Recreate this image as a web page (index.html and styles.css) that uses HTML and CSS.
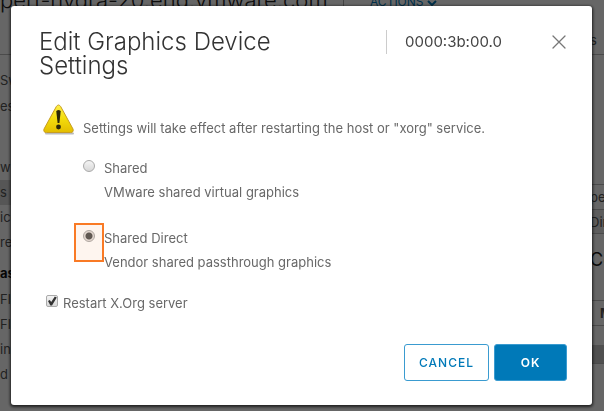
FILE: index.html
```html
<!DOCTYPE html>
<html lang="en">
<head>
    <meta charset="UTF-8">
    <meta name="viewport" content="width=device-width, initial-scale=1.0">
    <title>Edit Graphics Device Settings</title>
    <link rel="stylesheet" href="styles.css">
</head>
<body>
    <div class="page">
        <div class="page-header">
            <div class="host-name">pert-hydra-20.eng.vmware.com</div>
            <a class="actions" href="#">ACTIONS
                <svg width="10" height="6" viewBox="0 0 10 6"><path d="M1 1l4 4 4-4" fill="none" stroke="currentColor" stroke-width="2"/></svg>
            </a>
            <div class="tab">s</div>
        </div>
        <div class="page-body">
            <ul class="nav">
                <li>Sw</li>
                <li>es</li>
                <li class="gap"></li>
                <li>w</li>
                <li class="selected">s</li>
                <li>ice</li>
                <li>re</li>
                <li class="section">ask</li>
                <li>Fla</li>
                <li>Fla</li>
                <li>in</li>
                <li>d T</li>
            </ul>
            <div class="panel">
                <div class="cell">pe</div>
                <div class="cell shaded">Dire</div>
                <div class="panel-title">Ce</div>
                <div class="cell bold">M</div>
                <div class="cell"></div>
                <div class="strip"></div>
                <div class="cell"></div>
            </div>
        </div>
    </div>

    <div class="backdrop">
        <form class="modal" role="dialog" aria-labelledby="modal-title">
            <div class="modal-header">
                <h1 id="modal-title">Edit Graphics Device Settings</h1>
                <div class="device">0000:3b:00.0</div>
                <button type="button" class="close" aria-label="Close">
                    <svg width="16" height="16" viewBox="0 0 16 16"><path d="M2 2l12 12M14 2L2 14" fill="none" stroke="#777" stroke-width="1.3" stroke-linecap="round"/></svg>
                </button>
            </div>
            <div class="modal-body">
                <div class="message">
                    <svg width="32" height="31" viewBox="0 0 32 31">
                        <defs>
                            <linearGradient id="warn" x1="0" y1="0" x2="0" y2="1">
                                <stop offset="0" stop-color="#fff04a"/>
                                <stop offset="0.5" stop-color="#f3dc0c"/>
                                <stop offset="1" stop-color="#e3bd00"/>
                            </linearGradient>
                        </defs>
                        <path d="M3 29.5h27" stroke="#bbb" stroke-width="2" stroke-linecap="round"/>
                        <path d="M13.3 2.6Q15.5-.6 17.7 2.6L30 25Q31 28.5 27.5 28.5H3.5Q0 28.5 1 25Z" fill="url(#warn)" stroke="#c79d20" stroke-width="1"/>
                        <path d="M13.3 7.5Q13.3 6 15.5 6t2.2 1.500L16.4 19h-1.800Z" fill="#2b2708"/>
                        <circle cx="15.5" cy="23" r="2.4" fill="#2b2708"/>
                    </svg>
                    <p>Settings will take effect after restarting the host or "xorg" service.</p>
                </div>
                <div class="option">
                    <input type="radio" name="mode" id="shared">
                    <label for="shared">Shared</label>
                    <p>VMware shared virtual graphics</p>
                </div>
                <div class="option">
                    <input type="radio" name="mode" id="direct" checked>
                    <label for="direct">Shared Direct</label>
                    <p>Vendor shared passthrough graphics</p>
                    <div class="marker"></div>
                </div>
                <div class="restart">
                    <input type="checkbox" id="restart" checked>
                    <label for="restart">Restart X.Org server</label>
                </div>
            </div>
            <div class="modal-footer">
                <button type="button" class="btn">CANCEL</button>
                <button type="button" class="btn primary">OK</button>
            </div>
        </form>
    </div>
</body>
</html>
```

FILE: styles.css
```css
* {
    box-sizing: border-box;
}
body {
    margin: 0;
    font-family: Inter, "Open Sans", sans-serif;
    font-size: 13px;
    color: #686868;
    background: #fff;
}
h1, p, ul {
    margin: 0;
    padding: 0;
}

/* page behind the dialog */
.page {
    height: 100vh;
    overflow: hidden;
    color: #555;
}
.page-header {
    display: flex;
    height: 55px;
    border-bottom: 1px solid #bbb;
    white-space: nowrap;
}
.host-name {
    width: 344px;
    height: 24px;
    margin-top: -14px;
    border-right: 1px solid #aaa;
    font-size: 22px;
    line-height: 28px;
    font-weight: 300;
    color: #222;
}
.actions {
    height: 20px;
    margin: -8px 0 0 26px;
    font-size: 12px;
    line-height: 20px;
    color: #0079b8;
    text-decoration: none;
}
.tab {
    width: 14px;
    margin: 32px 0 0 auto;
}
.page-body {
    display: flex;
    justify-content: space-between;
}
.nav {
    width: 100px;
    padding-top: 13px;
    list-style: none;
    line-height: 25px;
    white-space: nowrap;
}
.nav li {
    height: 25px;
}
.nav .gap {
    height: 36px;
}
.nav .selected {
    background: #d8d8d8;
}
.nav .section {
    height: 32px;
    padding-top: 6px;
    font-weight: bold;
    color: #111;
}
.nav li:first-child {
    height: 26px;
}
.panel {
    width: 14px;
    padding-top: 129px;
    white-space: nowrap;
}
.cell {
    height: 25px;
    border-top: 1px solid #bbb;
    line-height: 24px;
}
.shaded {
    background: #e8e8e8;
    border-bottom: 1px solid #bbb;
}
.bold {
    padding-left: 10px;
    font-weight: bold;
}
.panel-title {
    height: 66px;
    line-height: 52px;
    font-size: 18px;
    color: #222;
}
.strip {
    height: 18px;
    margin-top: -5px;
    background: #c8c8c8;
}

/* dialog */
.backdrop {
    position: fixed;
    inset: 0;
    padding: 6px 12px 6px 11px;
    background: rgba(0, 0, 0, 0.6);
}
.modal {
    display: flex;
    flex-direction: column;
    height: 100%;
    padding: 24px 25px 24px 28px;
    border-radius: 3px;
    background: #fff;
    box-shadow: 0 1px 3px 1px rgba(0, 0, 0, 0.7);
}
.modal-header {
    display: flex;
    align-items: flex-start;
    line-height: 24px;
}
.modal-header h1 {
    flex: 1;
    padding-right: 80px;
    font-size: 24px;
    line-height: 24px;
    font-weight: 300;
    color: #333;
}
.device {
    width: 157px;
    padding-left: 18px;
    border-left: 1px solid #ccc;
    font-size: 15px;
    color: #444;
}
.close {
    display: flex;
    align-items: center;
    justify-content: flex-end;
    width: 24px;
    height: 24px;
    padding: 0;
    border: none;
    background: none;
    cursor: pointer;
}
.modal-body {
    flex: 1;
    padding: 26px 0 0 4px;
    line-height: 24px;
}
.message {
    display: flex;
    gap: 8px;
    height: 36px;
}
.message p {
    margin-top: 12px;
}
.option {
    position: relative;
    display: grid;
    grid-template-columns: 21px 1fr;
    margin: 16px 0 22px 40px;
}
.option p {
    grid-column: 2;
}
.option + .option {
    margin-top: 0;
    margin-bottom: 17px;
}
input {
    appearance: none;
    width: 12px;
    height: 12px;
    margin: 4px 0 0;
    border: 1px solid #aaa;
    background: linear-gradient(#f4f4f4, #d8d8d8);
}
input[type="radio"] {
    border-radius: 50%;
}
input[type="radio"]:checked {
    background: radial-gradient(circle, #555 0 3px, #e4e0de 4px);
}
.marker {
    position: absolute;
    top: -3px;
    left: -9px;
    width: 30px;
    height: 39px;
    border: 2px solid #f97a25;
    background: rgba(245, 130, 51, 0.08);
    pointer-events: none;
}
.restart {
    display: flex;
    gap: 5px;
    padding-left: 3px;
}
input[type="checkbox"] {
    border-radius: 2px;
}
input[type="checkbox"]:checked::before {
    content: "";
    display: block;
    width: 10px;
    height: 10px;
    background: #333;
    clip-path: polygon(10% 50%, 28% 40%, 42% 60%, 78% 6%, 98% 14%, 50% 94%, 34% 94%);
}
.modal-footer {
    display: flex;
    justify-content: flex-end;
    gap: 5px;
}
.btn {
    width: 85px;
    height: 37px;
    border: 1px solid #3a9bd0;
    border-radius: 3px;
    background: #fff;
    color: #0079b8;
    font-family: inherit;
    font-size: 12px;
    font-weight: 500;
    letter-spacing: 1px;
    cursor: pointer;
}
.primary {
    width: 73px;
    background: #0079b8;
    color: #fff;
    font-weight: 600;
}
```
